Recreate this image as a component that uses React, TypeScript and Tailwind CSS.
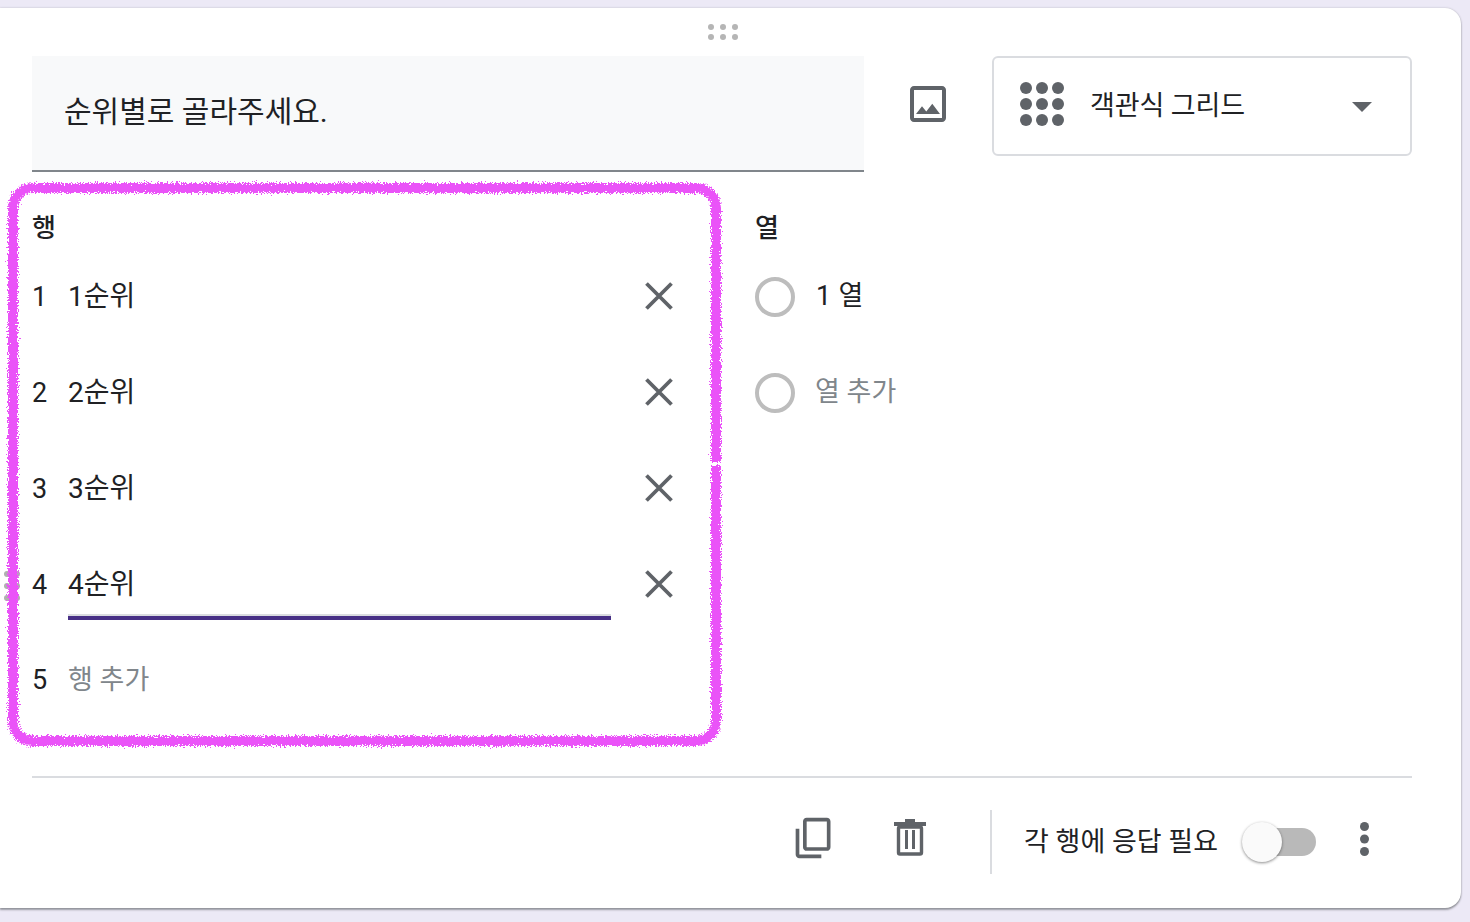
import React from "react";

function XIcon() {
  return (
    <svg width="30" height="30" viewBox="0 0 30 30" className="shrink-0">
      <path d="M2.5 2.5 27.5 27.5M27.5 2.5 2.5 27.5" stroke="#5f6368" strokeWidth="3.8" fill="none" />
    </svg>
  );
}

function DotGrid({ cols, rows, size, gapX, gapY, color }: { cols: number; rows: number; size: number; gapX: number; gapY: number; color: string }) {
  const circles = [];
  for (let r = 0; r < rows; r++) {
    for (let c = 0; c < cols; c++) {
      circles.push(<circle key={`${r}-${c}`} cx={size / 2 + c * gapX} cy={size / 2 + r * gapY} r={size / 2} fill={color} />);
    }
  }
  return (
    <svg width={size + (cols - 1) * gapX} height={size + (rows - 1) * gapY} className="block shrink-0">
      {circles}
    </svg>
  );
}

function Row({ n, label, focused }: { n: number; label: string; focused?: boolean }) {
  return (
    <div className="relative flex h-[96px] items-center">
      {focused && (
        <div className="absolute left-[-28px] top-[35px]">
          <DotGrid cols={2} rows={3} size={6} gapX={10} gapY={12} color="#b0b0b0" />
        </div>
      )}
      <div className="w-[36px] pt-[2px] text-[27px] leading-none text-[#202124]">{n}</div>
      <div className="relative h-[96px] w-[543px]">
        <div className="flex h-[96px] items-center pt-[2px] text-[28px] leading-none text-[#202124]">{label}</div>
        {focused && (
          <div className="absolute bottom-[12px] left-0 right-0 h-[6px] border-t-2 border-[#dadce0] bg-[#472f86]" />
        )}
      </div>
      <div className="ml-[33px]">
        <XIcon />
      </div>
    </div>
  );
}

function Radio() {
  return <div className="mt-[1px] h-[40px] w-[40px] shrink-0 rounded-full border-4 border-[#bdbdbd]" />;
}

export default function App() {
  return (
    <div className="relative h-[922px] w-[1470px] overflow-hidden bg-[#ece9f6] pt-[8px] font-['Roboto','Noto_Sans_CJK_KR',sans-serif]">
      <div className="flex h-[900px] w-[1461px] flex-col rounded-r-[16px] bg-white pl-[32px] pr-[49px] shadow-[0_2px_2px_rgba(60,64,67,0.45),0_0_2px_rgba(60,64,67,0.3)]">
        <div className="flex h-[48px] items-center pl-[676px]">
          <DotGrid cols={3} rows={2} size={6} gapX={12} gapY={10} color="#b5b5b5" />
        </div>

        <div className="flex items-start">
          <div className="flex h-[116px] w-[832px] items-center border-b-2 border-[#80868b] bg-[#f8f9fa] pb-[2px] pl-[32px] text-[30px] leading-none text-[#202124]">
            순위별로 골라주세요.
          </div>
          <svg width="48" height="48" viewBox="0 0 24 24" className="ml-[40px] mt-[24px] shrink-0">
            <path
              fill="#5f6368"
              d="M19 5v14H5V5h14m0-2H5c-1.1 0-2 .9-2 2v14c0 1.1.9 2 2 2h14c1.1 0 2-.9 2-2V5c0-1.1-.9-2-2-2zm-4.86 8.86l-3 3.87L9 13.14 6 17h12l-3.86-5.14z"
            />
          </svg>
          <div className="ml-[40px] flex h-[100px] w-[420px] items-center rounded-[6px] border-2 border-[#dadce0] pl-[26px]">
            <div className="mb-[4px]">
              <DotGrid cols={3} rows={3} size={12} gapX={16} gapY={16} color="#5f6368" />
            </div>
            <div className="ml-[26px] text-[27px] leading-none tracking-[-0.1px] text-[#202124]">객관식 그리드</div>
            <svg width="20" height="10" viewBox="0 0 20 10" className="ml-[107px] mt-[2px] shrink-0">
              <path d="M0 0h20L10 10z" fill="#5f6368" />
            </svg>
          </div>
        </div>

        <div className="flex">
          <div className="w-[723px]">
            <div className="flex h-[76px] items-center pt-[36px] text-[26px] font-medium leading-none text-[#202124]">행</div>
            <Row n={1} label="1순위" />
            <Row n={2} label="2순위" />
            <Row n={3} label="3순위" />
            <Row n={4} label="4순위" focused />
            <div className="flex h-[96px] items-center">
              <div className="w-[36px] text-[27px] leading-none text-[#202124]">5</div>
              <div className="text-[27px] leading-none text-[#80868b]">행 추가</div>
            </div>
          </div>
          <div>
            <div className="flex h-[76px] items-center pt-[36px] text-[26px] font-medium leading-none text-[#202124]">열</div>
            <div className="flex h-[96px] items-center">
              <Radio />
              <div className="ml-[21px] text-[27px] leading-none tracking-[0.3px] text-[#202124]">1 열</div>
            </div>
            <div className="flex h-[96px] items-center">
              <Radio />
              <div className="ml-[20px] text-[27px] leading-none text-[#80868b]">열 추가</div>
            </div>
          </div>
        </div>

        <div className="mt-[48px] h-[2px] w-[1380px] bg-[#dadce0]" />

        <div className="flex h-[129px] items-start pl-[760px] pt-[32px]">
          <svg width="44" height="44" viewBox="0 0 24 24" className="mt-[6px] shrink-0">
            <path
              fill="#5f6368"
              transform="matrix(1 0 0 -1 0 24)"
              d="M16 1H4c-1.1 0-2 .9-2 2v14h2V3h12V1zm3 4H8c-1.1 0-2 .9-2 2v14c0 1.1.9 2 2 2h11c1.1 0 2-.9 2-2V7c0-1.1-.9-2-2-2zm0 16H8V7h11v14z"
            />
          </svg>
          <svg width="32" height="37" viewBox="0 0 32 37" className="ml-[58px] mt-[9px] shrink-0">
            <path fill="#5f6368" d="M11 0h10v3h11v4H0V3h11z" />
            <rect x="4.5" y="8" width="23" height="27" rx="1.5" fill="none" stroke="#5f6368" strokeWidth="3.4" />
            <rect x="11" y="11" width="3" height="19" fill="#5f6368" />
            <rect x="18" y="11" width="3" height="19" fill="#5f6368" />
          </svg>
          <div className="ml-[64px] h-[64px] w-[2px] bg-[#dadce0]" />
          <div className="ml-[32px] flex h-[64px] items-center text-[27px] leading-none text-[#202124]">각 행에 응답 필요</div>
          <div className="relative ml-[24px] mt-[12px] flex h-[40px] w-[74px] shrink-0 items-center justify-end">
            <div className="h-[28px] w-[66px] rounded-full bg-[#b9b9b9]" />
            <div className="absolute left-0 top-0 h-[40px] w-[40px] rounded-full bg-[#fafafa] shadow-[0_1px_3px_rgba(0,0,0,0.45)]" />
          </div>
          <div className="ml-[44px] mt-[12px]">
            <DotGrid cols={1} rows={3} size={9} gapX={0} gapY={12.5} color="#5f6368" />
          </div>
        </div>
      </div>

      <svg width="1470" height="922" className="pointer-events-none absolute left-0 top-0">
        <defs>
          <filter id="rough" x="-5%" y="-5%" width="110%" height="110%">
            <feTurbulence type="fractalNoise" baseFrequency="0.7" numOctaves="3" seed="7" result="n" />
            <feDisplacementMap in="SourceGraphic" in2="n" scale="8" xChannelSelector="R" yChannelSelector="G" />
          </filter>
        </defs>
        <path
          d="M716 466V721a20 20 0 0 1-20 20H33a20 20 0 0 1-20-20V208a20 20 0 0 1 20-20H696a20 20 0 0 1 20 20V462"
          fill="none"
          stroke="#ea52f8"
          strokeWidth="10"
          filter="url(#rough)"
        />
      </svg>
    </div>
  );
}
